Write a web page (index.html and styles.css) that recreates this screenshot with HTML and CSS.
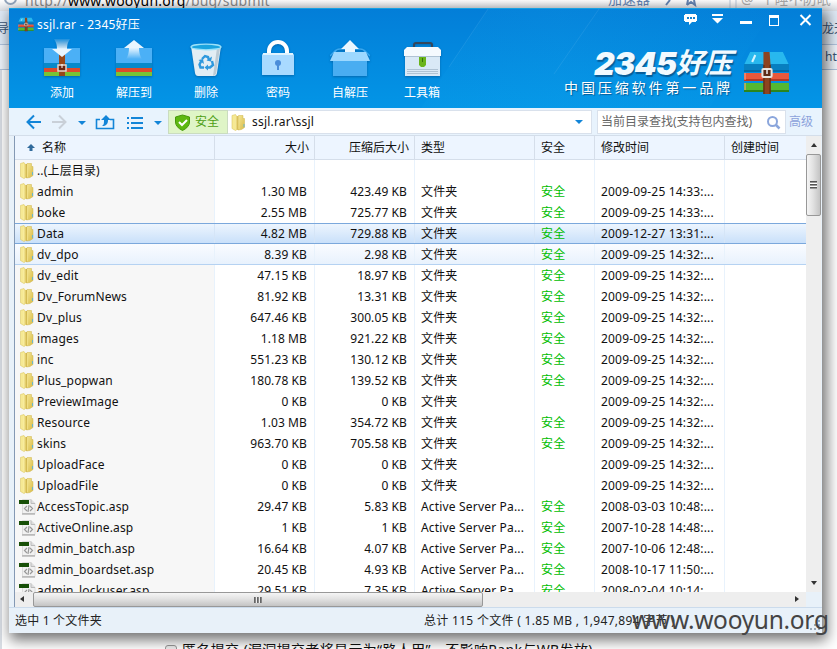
FILE: index.html
```html
<!DOCTYPE html>
<html lang="zh-CN">
<head>
<meta charset="utf-8">
<title>ssjl.rar - 2345好压</title>
<link rel="stylesheet" href="styles.css">
</head>
<body>
<svg class="defs" width="0" height="0">
  <defs>
    <linearGradient id="fold" x1="0" x2="1"><stop offset="0" stop-color="#f9efa8"/><stop offset=".6" stop-color="#e3cd6a"/><stop offset="1" stop-color="#c4a645"/></linearGradient>
    <linearGradient id="flap" x1="0" y1="0" x2="1" y2="1"><stop offset="0" stop-color="#f5e795"/><stop offset="1" stop-color="#d8bb48"/></linearGradient>
    <linearGradient id="arrowDown" x1="0" y1="0" x2="0" y2="1"><stop offset="0" stop-color="#fff" stop-opacity=".1"/><stop offset=".6" stop-color="#e9f6ff"/></linearGradient>
    <linearGradient id="arrowUp" x1="0" y1="1" x2="0" y2="0"><stop offset="0" stop-color="#fff" stop-opacity="0"/><stop offset=".6" stop-color="#e9f6ff"/></linearGradient>
    <symbol id="folder" viewBox="0 0 14 17"><path d="M.5 1.500 4 .500 5 2v14l-1 .5-3.500-2z" fill="#f6e993" stroke="#dcc766" stroke-width=".6"/><path d="M3.500 2H7v14l-3.500-.5z" fill="url(#fold)"/><path d="M7 1.500h4.500v3h1.500v9L10 15.500 6.500 16z" fill="url(#flap)" stroke="#cfb44b" stroke-width=".5"/><path d="M7.500 2v13" stroke="#f3e48f" stroke-width=".7"/><path d="M12.500 10v3" stroke="#6cb6c8"/></symbol>
    <symbol id="asp" viewBox="0 0 17 17"><path d="M3.500 1.500h8.500l4 4v10h-12.500z" fill="#f1f1f1" stroke="#dcdcdc"/><path d="M12 1.500v4h4" fill="#ddd" stroke="#bbb"/><path d="M3 16h13" stroke="#999"/><path d="M0 2h10v4H0z" fill="#174f07"/><path d="M8 8 5.500 10.500 8 13M11 8l2.500 2.500L11 13M10 7l-1 7" fill="none" stroke="#999" stroke-width="1.200"/></symbol>
    <symbol id="books" viewBox="0 0 46 46"><path d="M7 2h32l6 13H1z" fill="#28b8ee"/><path d="M1 14h44v8H1z" fill="#087fc0"/><path d="M1 20h44v2H1z" fill="#056aa8"/><path d="M1 23h44v8H1z" fill="#e9583c"/><path d="M1 29h44v2H1z" fill="#b83722"/><path d="M1 33h44v9H1z" fill="#54b832"/><path d="M1 40h44v2H1z" fill="#2b851d"/><path d="M2 23v7M2 33v7" stroke="#f9a18c"/><path d="M12 5 9 12" stroke="#d6f4ff" stroke-width="2"/><path d="M20 2h6l1 13v29h-7V15z" fill="#8d4420"/><path d="M20.500 15v29M26.500 15v29" stroke="#57270f"/><rect x="19" y="19" width="9" height="8" rx="1" fill="#5d2b16" stroke="#e8e4df" stroke-width="2"/><path d="M23.500 19v5" stroke="#eee" stroke-width="1.500"/></symbol>
  </defs>
</svg>

<div class="backdrop">
  <div class="address"><span class="ring"></span><span class="url">http://<b>www.wooyun.org</b>/bug/submit</span><span class="boost">加速器</span><svg class="marks" width="79" height="11" viewBox="0 0 79 11" fill="none" stroke="#6483b1" stroke-width="2"><path d="M12 0 8 5M29 5l4-3 4 3-1-5M29 5l1-5"/><path d="M72 0v9M78 0v9" stroke="#b9c7d8" stroke-width="1"/></svg><span class="query">@&nbsp; 个睡不防眠</span></div>
  <div class="strip nav"><span>导航</span><span>龙天</span></div>
  <div class="strip tabs"><span></span><span>htt</span></div>
  <div class="page"></div>
  <div class="option"><span class="box"></span><span>匿名提交 (漏洞提交者将显示为“路人甲”，不影响Rank与WB发放)</span></div>
</div>

<main class="window">
  <header class="banner">
    <svg class="rays" viewBox="0 0 813 99"><defs><linearGradient id="ray" x1="0" x2="1"><stop offset="0" stop-color="#20b7f4" stop-opacity=".06"/><stop offset=".4" stop-color="#20b7f4" stop-opacity=".12"/><stop offset="1" stop-color="#20b7f4" stop-opacity=".02"/></linearGradient></defs><path d="M479 0 435 65 412 99H700L765 0z" fill="url(#ray)"/><path d="M590 0 545 65M479 0 440 58" stroke="#fff" opacity=".07"/></svg>
    <div class="titlebar">
      <svg width="16" height="15" viewBox="0 0 46 46" preserveAspectRatio="none"><use href="#books"/></svg>
      <span class="title">ssjl.rar - 2345好压</span>
      <svg class="controls" width="130" height="16" viewBox="0 0 130 16"><g fill="#fff"><path d="M2 2h11v1h1v6h-1v1H9l-3 3v-3H2V9H1V3h1z"/><path d="M29 2h11v2H29zM29 6h11l-5.500 5.500z"/><path d="M57 9h12v3H57z"/><path d="M86 3h10v11H86zM87 6v7h8V6z" fill-rule="evenodd"/></g><path d="M4 6h2M7 6h2M10 6h2" stroke="#1581cf" stroke-width="2"/><path d="m117.500 3 10 10M127.500 3l-10 10" stroke="#fff" stroke-width="2"/></svg>
    </div>
    <div class="bannerbody">
      <nav class="tools">
        <button><svg viewBox="0 0 40 42"><path d="M2 10h36v15H2z" fill="#4bb0f6"/><path d="M2 25h36v5H2z" fill="#0789c9"/><path d="M2 30h36v4H2z" fill="#dd4a2b"/><path d="M2 34h36v4H2z" fill="#79c336"/><path d="M17 12h6v26h-6z" fill="#984719"/><rect x="16" y="27" width="8" height="6" fill="#6b2410" stroke="#e5d6cb" stroke-width="1.500"/><path d="M20 26v4" stroke="#fff"/><path d="M12 1h16q-3 4-3 10h5L20 19 10 11h5q0-6-3-10z" fill="url(#arrowDown)"/></svg>添加</button>
        <button><svg viewBox="0 0 40 42"><path d="M2 10h36v15H2z" fill="#4bb0f6"/><path d="M2 25h36v5H2z" fill="#0789c9"/><path d="M2 30h36v4H2z" fill="#dd4a2b"/><path d="M2 34h36v4H2z" fill="#79c336"/><path d="m20 2 10 8h-5q0 7 3 11H12q3-4 3-11h-5z" fill="url(#arrowUp)"/></svg>解压到</button>
        <button><svg viewBox="0 0 40 42"><path d="M5 8h30l-4 27q-.5 3-3 3H12q-2.500 0-3-3z" fill="#e2edf4"/><path d="M31 10h3l-4 26-3 2z" fill="#bccbd5"/><ellipse cx="20" cy="9" rx="15" ry="2.800" fill="#1aa4df" stroke="#9be2fa" stroke-width="1.300"/><path d="m16 21 3-3 3 1 1 3M26 23l1 4-3 2.500h-3M18 29.500h-3.500l-1-3 2-4" fill="none" stroke="#2e98dd" stroke-width="2.400"/><path d="m20.500 22.500 4.500 1 1-5zM22 26.500v6l-3.500-3zM12.500 22l4.500-1 1 5z" fill="#2e98dd"/></svg>删除</button>
        <button><svg viewBox="0 0 40 42"><path d="M11 17v-4a9 9 0 0 1 18 0v4" fill="none" stroke="#fff" stroke-width="4"/><path d="M4 17q0-1 2-2h28q2 1 2 2v20H4z" fill="#a9daff"/><path d="M5 16h30" stroke="#e0f4ff" stroke-width="2"/><circle cx="20" cy="25" r="3" fill="#4a8dda"/><path d="M20 25v7" stroke="#4a8dda" stroke-width="2"/></svg>密码</button>
        <button><svg viewBox="0 0 40 42"><path d="M6 12 0 18M34 12l6 6M5 14q1-3 5-3h20q4 0 5 3" fill="none" stroke="#39a8ef" stroke-width="1.500"/><path d="M3 21h34v17H3z" fill="#49adf1"/><path d="M4 14h32l4 9H0z" fill="#9cd8ff"/><path d="m20 2 9 9h-4v3H15v-3h-4z" fill="#eaf7ff"/></svg>自解压</button>
        <button><svg viewBox="0 0 40 42"><path d="M12 9V7q0-2 2-2h14q2 0 2 2v3" fill="none" stroke="#34475c" stroke-width="2"/><path d="M3 14h35v24H3z" fill="#d9e9f6"/><path d="m5 9h31l3 3v6H2v-6z" fill="#f5fafe"/><path d="M3 18.500h35M5 31.500h31M5 33.500h31M5 35.500h31" stroke="#afc3d4"/><path d="M17 19h7v8l-2 2h-3l-2-2z" fill="#69b41b"/><path d="M20.500 20v4" stroke="#35700b"/></svg>工具箱</button>
      </nav>
      <div class="brand"><div class="wordmark"><div class="name"><span>2345</span><i>好压</i></div><div class="slogan">中国压缩软件第一品牌</div></div><svg width="47" height="46" viewBox="0 0 46 46" preserveAspectRatio="none"><use href="#books"/></svg></div>
    </div>
  </header>

  <div class="toolbar">
    <svg class="moves" width="155" height="24" viewBox="0 0 155 24"><path d="M19 12H6M12 5.500 5.500 12l6.500 6.500" fill="none" stroke="#1285d8" stroke-width="2"/><path d="M30 12h13M37 5.500l6.500 6.500-6.500 6.500" fill="none" stroke="#c9d0d8" stroke-width="2"/><path d="M56 11h8l-4 4zM132 11h8l-4 4z" fill="#1285d8"/><path d="M78 9.500h-3.500v9h17v-9H88" fill="none" stroke="#1285d8" stroke-width="1.600"/><path d="m84 5 5 5h-3c0 4-2 6-6 6 2-1 2-3 2-6h-3z" fill="#1285d8"/><path d="M105 8h2M105 13h2M105 18h2M109 8h12M109 13h12M109 18h12" stroke="#1285d8" stroke-width="2"/></svg>
    <div class="safe"><svg width="17" height="17" viewBox="0 0 17 17"><path d="M8.500 1 15.500 3v5q0 5-7 8.500Q1.500 13 1.500 8V3z" fill="#5db811" stroke="#45980a"/><path d="m5 8 3 3 5-5" fill="none" stroke="#fff" stroke-width="2"/></svg>安全</div>
    <div class="path"><svg width="15" height="17"><use href="#folder"/></svg><span>ssjl.rar\ssjl</span><svg class="drop" width="8" height="4"><path d="M0 0h8L4 4z" fill="#1285d8"/></svg></div>
    <div class="search"><span>当前目录查找(支持包内查找)</span><svg width="15" height="15" viewBox="0 0 15 15"><circle cx="6.500" cy="6.500" r="4.500" fill="none" stroke="#8ba6dc" stroke-width="2"/><path d="m10 10 3.500 3.500" stroke="#8ba6dc" stroke-width="2.500"/></svg></div>
    <a class="advanced">高级</a>
  </div>

  <section class="content">
    <div class="listing">
      <div class="row head"><div class="name"><svg width="8" height="8" viewBox="0 0 8 8"><path d="m4 0 4 4H5.500v3h-3V4H0z" fill="#316b9c"/></svg>名称</div><div class="num">大小</div><div class="num">压缩后大小</div><div>类型</div><div>安全</div><div>修改时间</div><div>创建时间</div></div>
      <div class="rows" id="rows"></div>
      <div class="hscroll"><span class="arrow left"></span><span class="thumb"><i></i></span><span class="arrow right"></span></div>
    </div>
    <div class="vscroll"><span class="arrow up"></span><span class="thumb"><i></i></span><span class="arrow down"></span></div>
  </section>
  <footer class="status"><span>选中 1 个文件夹</span><span class="total">总计 115 个文件 ( 1.85 MB , 1,947,894 字节 )</span><svg class="grip" width="12" height="12"><path d="M10 2h2M6 6h6M2 10h10" stroke="#9aa9b8" stroke-width="2" stroke-dasharray="2 2"/></svg></footer>
</main>
<div class="watermark">www.wooyun.org</div>
<script src="script.js"></script>
</body>
</html>
```
FILE: styles.css
```css
* { box-sizing: border-box; }
body { margin: 0; width: 837px; height: 649px; overflow: hidden; position: relative; background: #fff; font: 12px/20px "Noto Sans", "Noto Sans CJK SC", sans-serif; color: #111; }
.defs { position: absolute; }

.backdrop { display: flex; flex-direction: column; height: 649px; }
.address { height: 11px; display: flex; align-items: flex-end; background: linear-gradient(#fff, #d9dde3); overflow: hidden; white-space: nowrap; color: #888; font-size: 14px; line-height: 20px; }
.ring { width: 13px; height: 13px; flex: none; margin: 0 8px 6px 4px; border: 2px solid #92a5bd; border-radius: 50%; }
.url { width: 583px; line-height: 17px; margin-bottom: 2px; letter-spacing: .2px; }
.url b { font-weight: 400; color: #000; }
.boost { width: 50px; font-size: 14px; color: #6483b1; line-height: 17px; margin-bottom: 4px; }
.marks { flex: none; }
.query { color: #aaa; line-height: 17px; margin-bottom: 4px; padding-left: 4px; }
.strip { display: flex; justify-content: space-between; background: #dfeaf6; border-bottom: 1px solid #afc3dd; color: #3b5575; overflow: hidden; white-space: nowrap; }
.nav { height: 34px; line-height: 35px; }
.nav span:last-child { width: 15px; }
.nav span:first-child { margin-left: -3px; }
.tabs { height: 25px; line-height: 24px; background: #edf3fa; }
.tabs span:last-child { width: 12px; }
.page { flex: 1; border-left: 2px solid #d8dde4; }
.option { height: 6px; display: flex; gap: 5px; padding-left: 163px; border-left: 2px solid #d8dde4; overflow: hidden; font-size: 14px; line-height: 14px; letter-spacing: .35px; white-space: nowrap; }
.box { width: 12px; height: 12px; margin-top: 2px; border: 1px solid #999; border-radius: 3px; background: #eee; }

.window { position: absolute; left: 9px; top: 8px; width: 813px; height: 625px; display: flex; flex-direction: column; background: #e8f1f9; box-shadow: 3px 5px 13px 2px rgba(0,0,0,.55); }
.banner { height: 100px; position: relative; color: #fff; background: linear-gradient(#037ed8, #0395e6); border-top: 1px solid #16a0e2; }
.rays { position: absolute; inset: 0; width: 813px; height: 99px; }
.titlebar { position: relative; display: flex; height: 30px; padding: 8px 10px 0 9px; }
.title { flex: 1; margin: -2px 0 0 3px; letter-spacing: .25px; }
.controls { margin-top: -5px; margin-right: -1px; }
.bannerbody { position: relative; display: flex; justify-content: space-between; height: 69px; }
.tools { display: flex; padding-left: 17px; }
.tools button { width: 72px; height: 69px; padding: 0; border: 0; background: none; color: #fff; font: inherit; line-height: 16px; display: flex; flex-direction: column; align-items: center; gap: 5px; }
.tools svg { width: 40px; height: 42px; margin-top: -1px; filter: drop-shadow(0 1px 1px rgba(0,50,100,.4)); }
.brand { display: flex; padding: 11px 32px 0 0; gap: 8px; }
.wordmark { width: 171px; white-space: nowrap; }
.wordmark .name { display: flex; justify-content: flex-end; height: 27px; padding-right: 3px; font: italic 900 32px/28px Inter, "Noto Sans CJK SC", sans-serif; color: #f1faff; text-shadow: 1px 2px 1px #075d98; }
.wordmark span { letter-spacing: -1px; }
.wordmark i { font-size: 28px; line-height: 27px; font-weight: 700; }
.slogan { font: 14px/20px "Noto Sans CJK SC", sans-serif; letter-spacing: 2.9px; text-shadow: 1px 1px 1px #075d98; }

.toolbar { height: 28px; display: flex; align-items: center; padding: 1px 3px 0 13px; background: #e8f3fd; border-bottom: 1px solid #d4deea; }
.moves { flex: none; margin-right: -9px; }
.safe { height: 24px; width: 60px; flex: none; display: flex; align-items: center; gap: 2px; padding-left: 5px; background: #dff5c7; border: 1px solid #cadcc0; color: #4e9e15; line-height: 22px; }
.safe svg { margin-right: 2px; }
.path { height: 24px; width: 364px; display: flex; align-items: center; padding: 0 8px 0 3px; gap: 6px; background: #fff; border: 1px solid #d9e1ec; border-left: 0; letter-spacing: .2px; }
.drop { margin-left: auto; }
.search { width: 189px; height: 24px; margin-left: 5px; display: flex; align-items: center; justify-content: space-between; padding: 0 4px 0 3px; background: #fff; border: 1px solid #d9e1ec; color: #666; white-space: nowrap; }
.advanced { margin-left: 3px; color: #8ca2db; white-space: nowrap; }

.content { height: 472px; display: flex; padding: 0 1px 0 5px; border-bottom: 1px solid #cbdbec; }
.listing { width: 792px; border-left: 1px solid #8499b4; background: #fff; display: flex; flex-direction: column; }
.row { display: grid; grid-template-columns: 200px 100px 100px 120px 60px 130px 81px; height: 21px; flex: none; }
.row > div { border-right: 1px solid #e8f2fc; padding-left: 6px; line-height: 21px; white-space: nowrap; overflow: hidden; letter-spacing: .18px; }
.row > div:last-child { border-right: 0; }
.row .num { text-align: right; padding-right: 7px; letter-spacing: .1px; }
.head { height: 24px; background: #edf5ff; border-bottom: 1px solid #d5deea; }
.head > div, .head .num { line-height: 24px; letter-spacing: 0; border-right: 1px solid #d5deea; }
.head .num { padding-right: 5px; }
.head .name { display: flex; align-items: center; gap: 7px; padding-left: 12px; }
.rows { height: 432px; overflow: hidden; }
.rows .name { display: flex; align-items: center; gap: 3px; padding-left: 5px; background: #f7f7f7; letter-spacing: .15px; }
.rows .name svg { flex: none; width: 14px; height: 17px; }
.rows .asp svg { width: 17px; margin-left: -1px; margin-right: -2px; }
.ok { color: #00bd00; }
.rows .selected { background: linear-gradient(#edf5fe, #c9e0fa); border: 1px solid #7ba8dc; border-width: 1px 0; }
.rows .hover { background: linear-gradient(#fafcff, #e8f2fd); border-bottom: 1px solid #b5d2f2; }
.rows .selected > div { line-height: 19px; border-right-color: #d5e5f7; }
.rows .selected .name, .rows .hover .name { background: none; }

.arrow { width: 14px; height: 14px; display: flex; align-items: center; justify-content: center; }
.arrow::before { content: ""; border: 3px solid transparent; }
.left::before { border-right: 4px solid #333; border-left: 0; }
.right::before { border-left: 4px solid #333; border-right: 0; }
.up::before { border-bottom: 4px solid #333; border-top: 0; }
.down::before { border-top: 4px solid #333; border-bottom: 0; }
.hscroll { height: 15px; display: flex; background: #eee; }
.hscroll .thumb { width: 450px; margin-left: 4px; border: 1px solid #989898; border-radius: 2px; background: linear-gradient(#f5f5f5, #e2e2e2 45%, #c4c4c4); display: flex; align-items: center; justify-content: center; }
.hscroll i { width: 8px; height: 6px; background: repeating-linear-gradient(90deg, #666 0 1px, #888 1px 2px, #eee 2px 3px); }
.hscroll .right { margin-left: auto; margin-right: 2px; }
.vscroll { width: 15px; height: 456px; display: flex; flex-direction: column; background: #eee; }
.vscroll .arrow { height: 18px; width: 15px; }
.vscroll .thumb { height: 62px; border: 1px solid #989898; border-radius: 2px; background: linear-gradient(90deg, #f5f5f5, #e2e2e2 45%, #c4c4c4); display: flex; align-items: center; justify-content: center; }
.vscroll i { width: 7px; height: 8px; background: repeating-linear-gradient(#555 0 1px, #999 1px 2px, #fff 2px 3px); }
.vscroll .down { margin-top: auto; }
.status { height: 25px; display: flex; line-height: 26px; padding-left: 6px; white-space: nowrap; color: #222; }
.status span:first-child { width: 409px; letter-spacing: .2px; }
.total { letter-spacing: .3px; }
.grip { margin: 11px 2px 0 auto; }
.watermark { position: absolute; left: 632px; top: 602px; font: 24.5px/36px "Noto Sans", sans-serif; letter-spacing: -.3px; color: #444; white-space: nowrap; }
```
FILE: script.js
```js
const entries = [
  ["..(上层目录)"],
  ["admin", "1.30 MB", "423.49 KB", 1, "2009-09-25 14:33:..."],
  ["boke", "2.55 MB", "725.77 KB", 1, "2009-09-25 14:33:..."],
  ["Data", "4.82 MB", "729.88 KB", 1, "2009-12-27 13:31:...", "selected"],
  ["dv_dpo", "8.39 KB", "2.98 KB", 1, "2009-09-25 14:32:...", "hover"],
  ["dv_edit", "47.15 KB", "18.97 KB", 1, "2009-09-25 14:32:..."],
  ["Dv_ForumNews", "81.92 KB", "13.31 KB", 1, "2009-09-25 14:32:..."],
  ["Dv_plus", "647.46 KB", "300.05 KB", 1, "2009-09-25 14:32:..."],
  ["images", "1.18 MB", "921.22 KB", 1, "2009-09-25 14:32:..."],
  ["inc", "551.23 KB", "130.12 KB", 1, "2009-09-25 14:32:..."],
  ["Plus_popwan", "180.78 KB", "139.52 KB", 1, "2009-09-25 14:32:..."],
  ["PreviewImage", "0 KB", "0 KB", 0, "2009-09-25 14:32:..."],
  ["Resource", "1.03 MB", "354.72 KB", 1, "2009-09-25 14:32:..."],
  ["skins", "963.70 KB", "705.58 KB", 1, "2009-09-25 14:32:..."],
  ["UploadFace", "0 KB", "0 KB", 0, "2009-09-25 14:32:..."],
  ["UploadFile", "0 KB", "0 KB", 0, "2009-09-25 14:32:..."],
  ["AccessTopic.asp", "29.47 KB", "5.83 KB", 1, "2008-03-03 10:48:..."],
  ["ActiveOnline.asp", "1 KB", "1 KB", 1, "2007-10-28 14:48:..."],
  ["admin_batch.asp", "16.64 KB", "4.07 KB", 1, "2007-10-06 12:48:..."],
  ["admin_boardset.asp", "20.45 KB", "4.93 KB", 1, "2008-10-17 11:50:..."],
  ["admin_lockuser.asp", "29.51 KB", "7.35 KB", 1, "2008-02-04 10:14:..."]
];

document.getElementById("rows").innerHTML = entries.map(([name, size = "", packed = "", safe, date = "", state = ""]) => {
  const asp = name.endsWith(".asp");
  const type = asp ? "Active Server Pa..." : size ? "文件夹" : "";
  return `<div class="row ${state}"><div class="name ${asp ? "asp" : ""}"><svg><use href="#${asp ? "asp" : "folder"}"/></svg>${name}</div>` +
    `<div class="num">${size}</div><div class="num">${packed}</div><div>${type}</div>` +
    `<div class="ok">${safe ? "安全" : ""}</div><div>${date}</div><div></div></div>`;
}).join("");
```
